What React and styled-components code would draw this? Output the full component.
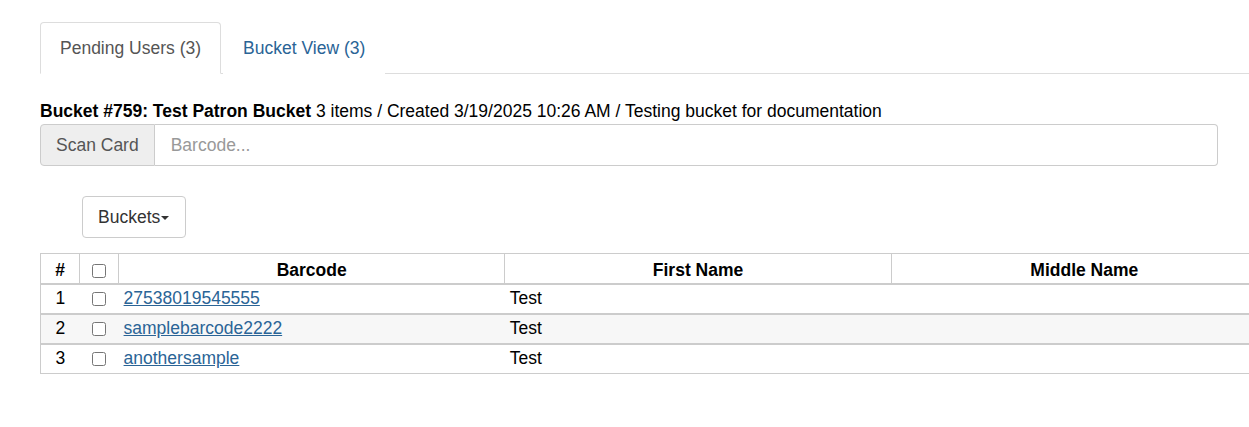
import React from "react";
import styled, { createGlobalStyle } from "styled-components";

const Global = createGlobalStyle`
  html, body { margin: 0; padding: 0; background: #fff; overflow: hidden; }
  body { font-family: "Liberation Sans", Arial, sans-serif; font-size: 17.5px; color: #000; }
`;

const Page = styled.div`
  padding: 22px 0 0 40px;
`;

const Tabs = styled.ul`
  display: flex;
  list-style: none;
  margin: 0;
  padding: 0;
  border-bottom: 1px solid #ddd;
`;

const Tab = styled.li`
  margin-right: 2px;
  margin-bottom: -1px;
  padding: 14px 19px 13px;
  line-height: 23px;
  border: 1px solid ${(p) => (p.$active ? "#ddd" : "transparent")};
  border-bottom-color: ${(p) => (p.$active ? "#fff" : "transparent")};
  border-radius: 4px 4px 0 0;
  background: #fff;
  color: ${(p) => (p.$active ? "#555" : "#2a6496")};
`;

const Content = styled.div`
  padding-right: 31px;
`;

const Heading = styled.div`
  margin-top: 27px;
  line-height: 21px;
`;

const Strong = styled.b`
  font-weight: bold;
`;

const InputGroup = styled.div`
  display: flex;
  margin-top: 2px;
  height: 42px;
  box-sizing: border-box;
`;

const Addon = styled.span`
  display: flex;
  align-items: center;
  padding: 0 15px;
  background: #eee;
  color: #555;
  border: 1px solid #ccc;
  border-radius: 4px 0 0 4px;
`;

const Input = styled.input`
  flex: 1;
  border: 1px solid #ccc;
  border-left: none;
  border-radius: 0 4px 4px 0;
  padding: 0 16px;
  font: inherit;
  color: #555;
  outline: none;
  &::placeholder { color: #999; }
`;

const Toolbar = styled.div`
  padding: 30px 0 15px 42px;
`;

const DropButton = styled.button`
  display: inline-flex;
  align-items: center;
  height: 42px;
  width: 104px;
  padding: 0 15px;
  background: #fff;
  border: 1px solid #ccc;
  border-radius: 4px;
  font: inherit;
  color: #333;
`;

const Caret = styled.span`
  display: inline-block;
  width: 0;
  height: 0;
  margin-left: 1px;
  margin-top: 2px;
  border-top: 4px solid #333;
  border-left: 4px solid transparent;
  border-right: 4px solid transparent;
`;

const Table = styled.table`
  border-collapse: collapse;
  table-layout: fixed;
  width: 1238px;
  border-left: 1px solid #ccc;
`;

const Th = styled.th`
  padding: 6px 5px 2px;
  line-height: 21px;
  font-weight: bold;
  text-align: center;
  border-top: 1px solid #ccc;
  border-right: 1px solid #ccc;
  border-bottom: 2px solid #ccc;
`;

const Tr = styled.tr`
  background: ${(p) => (p.$striped ? "#f7f7f7" : "#fff")};
`;

const Td = styled.td`
  padding: 3px 5px 5px;
  line-height: 20px;
  text-align: ${(p) => (p.$center ? "center" : "left")};
  border-top: 2px solid #ccc;
  border-bottom: ${(p) => (p.$last ? "1px solid #ccc" : "none")};
  vertical-align: middle;
`;

const Check = styled.input.attrs({ type: "checkbox" })`
  margin: 0;
  width: 14px;
  height: 14px;
  vertical-align: middle;
`;

const Link = styled.a`
  color: #2a6496;
  text-decoration: underline;
`;

const rows = [
  { n: 1, barcode: "27538019545555", first: "Test" },
  { n: 2, barcode: "samplebarcode2222", first: "Test" },
  { n: 3, barcode: "anothersample", first: "Test" },
];

export default function App() {
  return (
    <>
      <Global />
      <Page>
        <Tabs>
          <Tab $active>Pending Users (3)</Tab>
          <Tab>Bucket View (3)</Tab>
        </Tabs>
        <Content>
          <Heading>
            <Strong>Bucket #759: Test Patron Bucket</Strong> 3 items / Created 3/19/2025 10:26 AM / Testing bucket for documentation
          </Heading>
          <InputGroup>
            <Addon>Scan Card</Addon>
            <Input placeholder="Barcode..." />
          </InputGroup>
        </Content>
        <Toolbar>
          <DropButton>Buckets<Caret /></DropButton>
        </Toolbar>
        <Table>
          <colgroup>
            <col style={{ width: 39 }} />
            <col style={{ width: 39 }} />
            <col style={{ width: 386 }} />
            <col style={{ width: 386 }} />
            <col style={{ width: 386 }} />
          </colgroup>
          <thead>
            <tr>
              <Th>#</Th>
              <Th><Check /></Th>
              <Th>Barcode</Th>
              <Th>First Name</Th>
              <Th>Middle Name</Th>
            </tr>
          </thead>
          <tbody>
            {rows.map((r, i) => (
              <Tr key={r.n} $striped={i === 1}>
                <Td $center $last={i === rows.length - 1}>{r.n}</Td>
                <Td $center $last={i === rows.length - 1}><Check /></Td>
                <Td $last={i === rows.length - 1}><Link href="#">{r.barcode}</Link></Td>
                <Td $last={i === rows.length - 1}>{r.first}</Td>
                <Td $last={i === rows.length - 1}></Td>
              </Tr>
            ))}
          </tbody>
        </Table>
      </Page>
    </>
  );
}
